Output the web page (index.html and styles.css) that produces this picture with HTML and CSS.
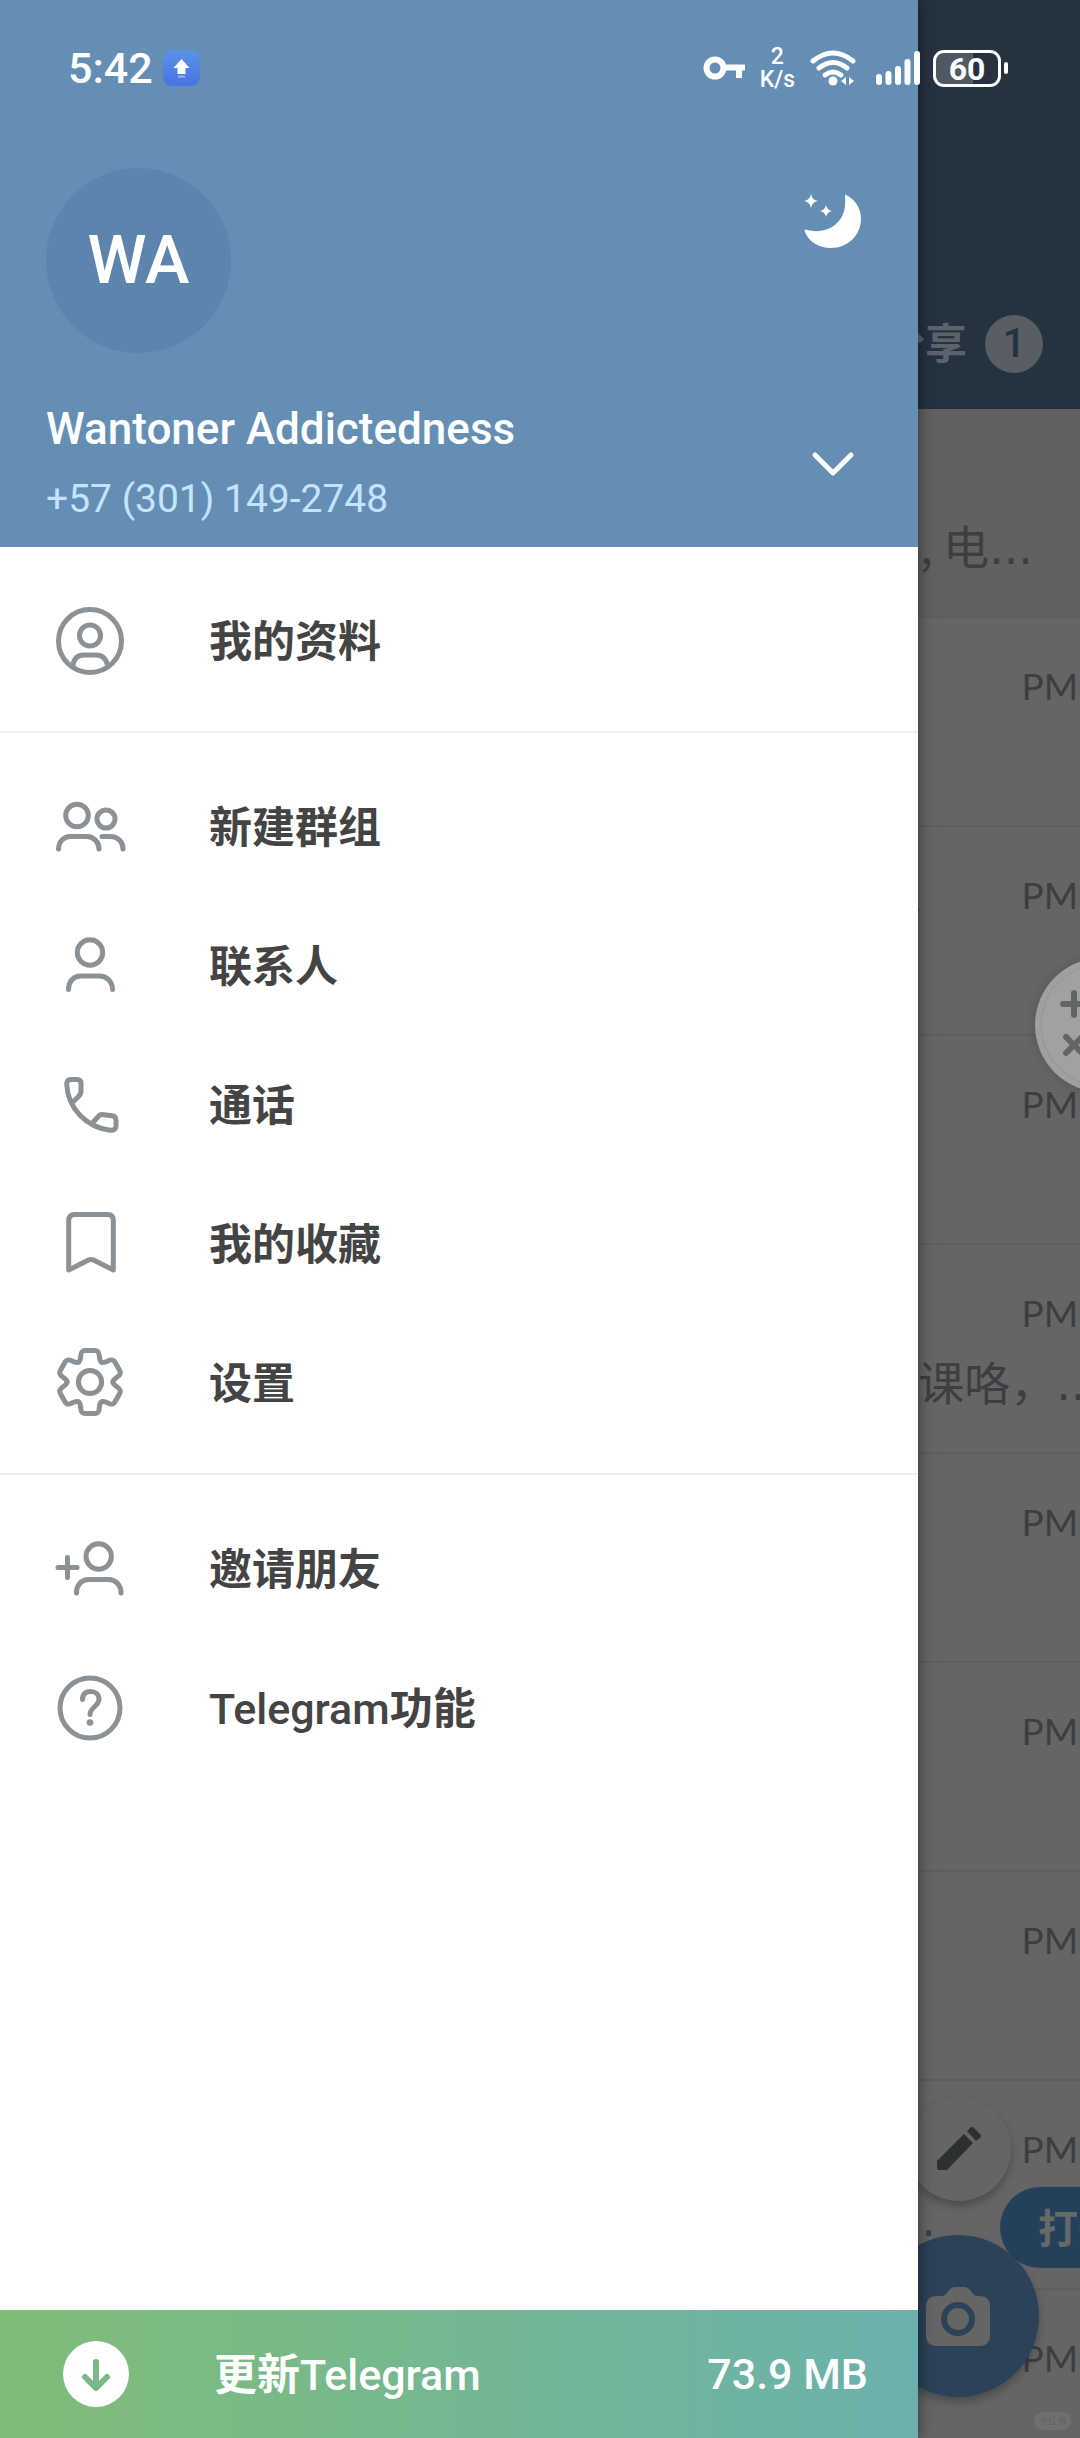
FILE: index.html
```html
<!DOCTYPE html>
<html lang="zh-CN">
<head>
<meta charset="utf-8">
<meta name="viewport" content="width=device-width, initial-scale=1">
<title>Telegram</title>
<link rel="stylesheet" href="styles.css">
</head>
<body>
<div class="app">
  <main class="chats">
    <header class="tabs">
      <span class="tab">分享</span>
      <span class="tab-count">1</span>
    </header>
    <ul class="chat-list">
      <li class="chat pinned"><p class="preview">, 电<span class="dots">...</span></p></li>
      <li class="chat"><time>PM</time></li>
      <li class="chat"><span class="chat-name">人</span><time>PM</time></li>
      <li class="chat"><time>PM</time></li>
      <li class="chat long"><time>PM</time><p class="preview">课咯，<span class="dots">...</span></p></li>
      <li class="chat"><time>PM</time></li>
      <li class="chat"><time>PM</time></li>
      <li class="chat"><time>PM</time></li>
      <li class="chat with-open"><time>PM</time><p class="preview"><span class="dots">...</span></p></li>
      <li class="chat"><time>PM</time></li>
    </ul>
    <button class="open-pill" type="button">打开</button>
    <button class="fab fab-edit" type="button" aria-label="编辑">
      <svg viewBox="0 0 48 48" width="48" height="48" fill="#2c3031"><path d="M2 36 29 9l9 9L12 45H4q-2 0-2-2zM32 6l3-3q2-2 4 0l6 6q2 2 0 4l-4 3z"/></svg>
    </button>
    <button class="fab fab-camera" type="button" aria-label="相机">
      <svg viewBox="0 0 66 60" width="66" height="60"><path fill="#656565" d="M12 10h5q2 0 3-1l5-6q2-2 5-2h9q3 0 5 2l5 6q1 1 3 1h2q11 0 11 11v28q0 11-11 11H12Q1 60 1 49V21Q1 10 12 10z"/><circle cx="33" cy="33" r="14" fill="#656565" stroke="#2b4258" stroke-width="6"/></svg>
    </button>
    <span class="watermark">小红书</span>
  </main>

  <aside class="drawer">
    <header class="profile">
      <div class="profile-top">
        <div class="avatar">WA</div>
        <button class="night" type="button" aria-label="夜间模式">
          <svg viewBox="0 0 60 60" width="60" height="60" fill="#fff"><path d="M44 3C53 7 59 16 59 27c0 16-13 29-30 29C17 56 7 50 3 40c-1-2 0-3 2-2 12 3 24 0 31-8 6-6 8-15 7-25 0-2 0-3 1-2z"/><path d="M9 2q1 6 7 7-6 1-7 7-1-6-7-7 6-1 7-7zM24 13q1 5 6 6-5 1-6 6-1-5-6-6 5-1 6-6z"/></svg>
        </button>
      </div>
      <div class="profile-bottom">
        <div>
          <h1 class="name">Wantoner Addictedness</h1>
          <p class="phone">+57 (301) 149-2748</p>
        </div>
        <button class="expand" type="button" aria-label="展开账号">
          <svg viewBox="0 0 44 28" width="44" height="28"><path d="M4 4l18 18L40 4" fill="none" stroke="#fff" stroke-width="5" stroke-linecap="round" stroke-linejoin="round"/></svg>
        </button>
      </div>
    </header>

    <nav class="menu">
      <div class="menu-group">
        <a class="item" href="#profile"><svg class="icon" viewBox="0 0 72 72"><circle cx="36" cy="36" r="31.5"/><circle cx="36" cy="30.5" r="10.5"/><path d="M19 60c1-6.500 5-10 11-10h12c6 0 10 3.500 11.500 10"/></svg><span class="label">我的资料</span></a>
      </div>
      <div class="menu-group">
        <a class="item" href="#group"><svg class="icon" viewBox="0 0 72 72"><circle cx="23" cy="24.500" r="11.300"/><circle cx="52" cy="28" r="9"/><path d="M4.500 58c0-7 5-12.500 12-12.500h16c7 0 12.500 5.500 12.500 12.500M48 45.500h8c8 0 13 5.500 13 12.500"/></svg><span class="label">新建群组</span></a>
        <a class="item" href="#contacts"><svg class="icon" viewBox="0 0 72 72"><circle cx="36" cy="22.500" r="12.700"/><path d="M14.500 59.500c0-8 5-13.500 12-13.500h19c7 0 13 5.500 13 13.500"/></svg><span class="label">联系人</span></a>
        <a class="item" href="#calls"><svg class="icon" viewBox="0 0 72 72"><path d="M19 33l5-5q3-3 3-6v-7.500q0-4-4-4h-6q-4.500 0-4.300 5C14 40 33 58.500 56 61.200q6 .5 6-4v-6q0-4-4-4.500l-8-1q-4-.5-6 2L39 53.500"/></svg><span class="label">通话</span></a>
        <a class="item" href="#saved"><svg class="icon" viewBox="0 0 72 72"><path d="M14.700 62V12.500q0-6 6-6h32.600q6 0 6 6V62L39.500 52q-2.500-1-5 0z"/></svg><span class="label">我的收藏</span></a>
        <a class="item" href="#settings"><svg class="icon" viewBox="0 0 72 72"><defs><path id="tooth" d="M-11.500-19.900C-9.800-20.900-9.500-22-9.300-26-9-30-8-31.500-4.500-31.500h9C8-31.500 9-30 9.300-26 9.500-22 9.800-20.900 11.500-19.900"/></defs><g transform="translate(36 35)"><circle r="11.600"/><use href="#tooth"/><use href="#tooth" transform="rotate(60)"/><use href="#tooth" transform="rotate(120)"/><use href="#tooth" transform="rotate(180)"/><use href="#tooth" transform="rotate(240)"/><use href="#tooth" transform="rotate(300)"/></g></svg><span class="label">设置</span></a>
      </div>
      <div class="menu-group">
        <a class="item" href="#invite"><svg class="icon" viewBox="0 0 72 72"><path d="M4 34.500h19M13.500 24.500v20"/><circle cx="44.700" cy="23.500" r="12.700"/><path d="M22.500 60c0-8 5-13.500 12-13.500h20c7 0 12.500 5.500 12.500 13.500"/></svg><span class="label">邀请朋友</span></a>
        <a class="item" href="#features"><svg class="icon" viewBox="0 0 72 72"><circle cx="36" cy="36" r="30"/><path d="M28.500 27.500c0-5 3-8 8-8s8.500 3 8.500 7.500c0 7.500-9 8-9 15.500"/><circle class="dot" cx="36" cy="50.500" r="3.300"/></svg><span class="label"><span class="latin">Telegram</span>功能</span></a>
      </div>
    </nav>

    <button class="update" type="button">
      <svg viewBox="0 0 66 66" width="66" height="66"><circle cx="33" cy="33" r="33" fill="#fff"/><path d="M33 21v26M22 36l11 11 11-11" fill="none" stroke="#7ab987" stroke-width="6" stroke-linecap="round" stroke-linejoin="round"/></svg>
      <span class="label update-label">更新<span class="latin">Telegram</span></span>
      <span class="update-size">73.9 MB</span>
    </button>
  </aside>

  <button class="bubble" type="button" aria-label="计算器">
    <svg viewBox="0 0 134 134" width="134" height="134"><circle cx="67" cy="67" r="61" fill="#a1a1a1" stroke="#949494"/><path d="M28 46h22M39 35v22M31 79l16 16M47 79L31 95" fill="none" stroke="#626566" stroke-width="6" stroke-linecap="round"/></svg>
  </button>

  <div class="status">
    <span class="clock">5:42</span>
    <svg class="badge" viewBox="0 0 37 36" width="37" height="36"><defs><linearGradient id="bg" x2="0" y2="1"><stop stop-color="#5c92ea"/><stop offset="1" stop-color="#4873e4"/></linearGradient></defs><rect width="37" height="36" rx="9" fill="url(#bg)"/><path d="M18.500 9l8 9h-4v6h-8v-6h-4z" fill="#fff"/><path d="M15 26.500h7" stroke="#9db8f2" stroke-width="2"/></svg>
    <div class="status-right">
      <svg viewBox="0 0 42 26" width="42" height="26" fill="none" stroke="#fff"><circle cx="12" cy="13" r="8.500" stroke-width="6"/><path d="M22 12.500h20M36 12v11" stroke-width="6"/></svg>
      <span class="speed"><span>2</span><span>K/s</span></span>
      <svg viewBox="0 0 46 36" width="46" height="36" fill="none" stroke="#fff" stroke-width="5" stroke-linecap="round"><path d="M3 11q20-16 40 0M9 18q14-11 28 0M15 25q8-6 16 0"/><circle cx="23" cy="31" r="4.500" fill="#fff" stroke="none"/><path d="M36 27v8l-5-4zM39 27v8l5-4z" fill="#fff" stroke="none"/></svg>
      <svg viewBox="0 0 44 36" width="44" height="36" stroke="#fff" stroke-width="6" stroke-linecap="round"><path d="M3 27v5M12.500 24v8M22 19v13M31.500 12v20M41 4v28"/></svg>
      <span class="battery"><span class="cell">60</span><span class="nub"></span></span>
    </div>
  </div>
</div>
</body>
</html>
```
FILE: styles.css
```css
* { box-sizing: border-box; }

body {
  margin: 0;
  font-family: Roboto, "Noto Sans CJK SC", sans-serif;
}

h1, p, ul { margin: 0; padding: 0; }

button {
  margin: 0;
  padding: 0;
  border: 0;
  background: none;
  font: inherit;
  color: inherit;
}

svg { display: block; flex: none; }

.app {
  position: relative;
  height: 100vh;
  overflow: hidden;
  background: #656565;
}

/* Chat list behind the drawer */
.tabs {
  height: 409px;
  padding: 0 37px 36px 0;
  display: flex;
  justify-content: flex-end;
  align-items: flex-end;
  gap: 18px;
  background: #25323f;
}

.tab {
  font-size: 42px;
  line-height: 56px;
  font-weight: 700;
  color: #5b646c;
}

.tab-count {
  width: 58px;
  height: 58px;
  border-radius: 50%;
  background: #585e64;
  color: #25323f;
  font-size: 40px;
  line-height: 58px;
  font-weight: 500;
  text-align: center;
}

.chat-list { list-style: none; }

.chat {
  height: 209px;
  padding: 42px 0 0;
  display: grid;
  grid-template: 52px 70px / 1fr auto;
  align-content: start;
  row-gap: 6px;
  border-bottom: 2px solid #5e5e5e;
  color: #3c3e3f;
}

.chat.pinned { background: #616161; padding-right: 47px; }

.chat time {
  grid-area: 1 / 2;
  padding-right: 2px;
  font: 37px/52px Lato, sans-serif;
}

.chat-name {
  justify-self: end;
  padding-right: 100px;
  font-size: 42px;
  line-height: 52px;
  color: #4a4a4a;
}

.preview {
  grid-area: 2 / 1 / 3 / 3;
  justify-self: end;
  font-family: "Noto Sans CJK SC", sans-serif;
  font-size: 46px;
  line-height: 70px;
  white-space: nowrap;
}

.dots { font-family: "DejaVu Sans", sans-serif; }

.chat.long .preview { margin-right: -20px; }
.chat.with-open .preview { padding-right: 144px; }

.open-pill {
  position: absolute;
  right: -80px;
  bottom: 170px;
  width: 160px;
  height: 81px;
  padding: 0 0 4px 38px;
  border-radius: 41px;
  background: #25405b;
  color: #686868;
  font-size: 40px;
  font-weight: 700;
  text-align: left;
}

.fab {
  position: absolute;
  display: flex;
  align-items: center;
  justify-content: center;
  border-radius: 50%;
  box-shadow: 0 5px 8px rgba(0, 0, 0, .25);
}

.fab-edit { right: 69px; bottom: 237px; width: 104px; height: 104px; background: #656565; }
.fab-camera { right: 41px; bottom: 41px; width: 162px; height: 162px; background: #2b4258; }

.watermark {
  position: absolute;
  right: 9px;
  bottom: 8px;
  padding: 0 5px;
  border-radius: 9px;
  background: #707070;
  color: #606060;
  font-size: 9px;
  line-height: 18px;
}

/* Drawer */
.drawer {
  position: absolute;
  inset: 0 15% 0 0;
  display: flex;
  flex-direction: column;
  background: #fff;
  box-shadow: 0 0 14px rgba(0, 0, 0, .5);
}

.profile {
  padding: 168px 46px 20px;
  background: #658eb5;
  color: #fff;
}

.profile-top,
.profile-bottom {
  display: flex;
  justify-content: space-between;
}

.profile-top { align-items: flex-start; padding-right: 10px; }

.avatar {
  width: 185px;
  height: 185px;
  border-radius: 50%;
  background: #5d84ad;
  font-size: 67px;
  line-height: 185px;
  font-weight: 500;
  text-align: center;
}

.night { margin-top: 24px; }

.profile-bottom {
  align-items: flex-end;
  margin-top: 46px;
  padding-right: 17px;
}

.name { font-size: 44px; line-height: 60px; font-weight: 500; }
.phone { margin-top: 12px; font-size: 39px; line-height: 56px; color: #c4e3ff; }
.expand { margin-bottom: 48px; }

.menu { flex: 1; }

.menu-group {
  padding: 24px 0 21px;
  border-bottom: 2px solid #efefef;
}

.menu-group:last-child { border: 0; }

.item {
  display: flex;
  align-items: center;
  gap: 83px;
  height: 139px;
  padding-left: 54px;
  color: #444;
  font-size: 43px;
  text-decoration: none;
}

.label {
  padding-bottom: 6px;
  font-weight: 700;
}

.latin { font-weight: 500; }

.icon {
  width: 72px;
  height: 72px;
  fill: none;
  stroke: #8b9195;
  stroke-width: 5;
  stroke-linecap: round;
  stroke-linejoin: round;
}

.icon .dot { fill: #8b9195; stroke: none; }

.update {
  height: 128px;
  padding: 0 50px 0 63px;
  display: flex;
  align-items: center;
  background: linear-gradient(90deg, #80bd77, #6ab1ad);
  color: #fff;
  font-size: 43px;
}

.update-label { margin-left: 85px; }
.update-size { margin-left: auto; font-weight: 500; }

.bubble {
  position: absolute;
  top: 958px;
  right: -89px;
  border-radius: 50%;
  background: #a0a0a0;
  box-shadow: 0 0 12px rgba(0, 0, 0, .15);
}

/* System status bar */
.status {
  position: absolute;
  inset: 0 0 auto;
  height: 136px;
  padding: 0 72px 0 68px;
  display: flex;
  align-items: center;
  color: #fff;
}

.clock { font-size: 43px; font-weight: 500; }
.badge { margin-left: 10px; }

.status-right {
  margin-left: auto;
  display: flex;
  align-items: center;
}

.speed {
  margin: 0 15px;
  display: flex;
  flex-direction: column;
  align-items: center;
  font-size: 23px;
  line-height: 23px;
  font-weight: 500;
}

.status-right svg + svg { margin-left: 20px; }

.battery { margin-left: 13px; display: flex; align-items: center; gap: 3px; }

.cell {
  width: 68px;
  height: 37px;
  border: 3px solid #fff;
  border-radius: 11px;
  background: linear-gradient(90deg, #525863 60%, #25323f 60%);
  font-size: 32px;
  line-height: 32px;
  font-weight: 700;
  text-align: center;
}

.nub { width: 4px; height: 12px; border-radius: 2px; background: #fff; }
```
